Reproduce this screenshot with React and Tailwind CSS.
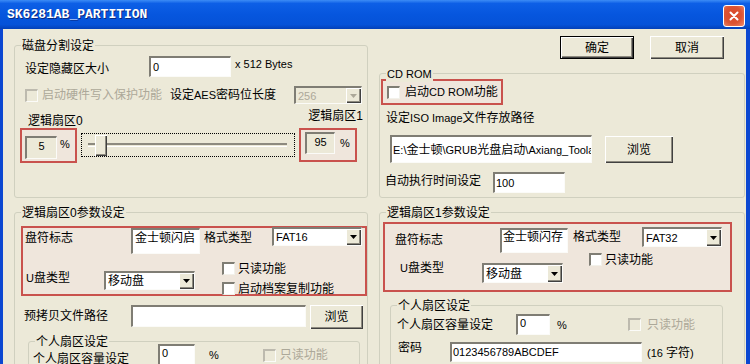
import React from "react";

const sunken =
  "border-t-2 border-l-2 border-r border-b border-t-[#7f7d74] border-l-[#7f7d74] border-r-[#fbfbf8] border-b-[#fbfbf8]";
const raised =
  "bg-[#ece9d8] shadow-[inset_1px_1px_0_#ffffff,inset_-1px_-1px_0_#404040,inset_-2px_-2px_0_#8d8a7f]";
const redBox = "border-2 border-[#c9524d] bg-[#efe6dc]";

function Check({ disabled }) {
  return disabled ? (
    <span className="block w-[13px] h-[13px] shrink-0 bg-[#ece9d8] border-t-2 border-l-2 border-r border-b border-t-[#bdbaae] border-l-[#bdbaae] border-r-[#fbfbf8] border-b-[#fbfbf8]" />
  ) : (
    <span className="block w-[13px] h-[13px] shrink-0 bg-white border-t-2 border-l-2 border-r border-b border-t-[#7f7d74] border-l-[#7f7d74] border-r-[#f2f1ea] border-b-[#f2f1ea]" />
  );
}

function Combo({ children, className, disabled }) {
  return (
    <div
      className={`flex shrink-0 ${sunken} ${
        disabled ? "bg-[#ece9d8] text-[#aca899]" : "bg-white"
      } ${className}`}
    >
      <span className="flex-1 flex items-center pl-[2px] overflow-hidden whitespace-nowrap">
        {children}
      </span>
      <span className={`w-[15px] flex items-center justify-center ${raised}`}>
        <svg width="7" height="4" viewBox="0 0 7 4">
          <path d="M0 0H7L3.5 4Z" fill={disabled ? "#aca899" : "#000"} />
        </svg>
      </span>
    </div>
  );
}

function Btn({ children, className, def }) {
  return def ? (
    <div
      className={`shrink-0 border border-black flex items-center justify-center ${raised} ${className}`}
    >
      {children}
    </div>
  ) : (
    <div className={`shrink-0 flex items-center justify-center ${raised} ${className}`}>
      {children}
    </div>
  );
}

function Group({ label, className, children }) {
  return (
    <div className={`relative shrink-0 border border-[#d0d0bf] rounded-[3px] ${className}`}>
      <span className="absolute left-[6px] -top-[8px] px-[1px] bg-[#ece9d8] leading-[16px] whitespace-nowrap">
        {label}
      </span>
      {children}
    </div>
  );
}

function L({ children }) {
  return <span className="text-[11px]">{children}</span>;
}

export default function App() {
  return (
    <div className="w-[750px] h-[364px] overflow-hidden flex flex-col text-[12px] leading-[16px] text-black [font-family:'Liberation_Sans','Noto_Sans_CJK_SC',sans-serif]">
      {/* Title bar */}
      <div className="h-[29px] shrink-0 flex items-center bg-[linear-gradient(180deg,#3c8cf6_0%,#0d5fe6_12%,#0656de_50%,#0552d8_85%,#0340b8_100%)]">
        <span className="ml-[7px] text-white font-bold text-[13px] leading-[16px] [font-family:'Liberation_Mono',monospace] [text-shadow:1px_1px_0_#0b2a80]">
          SK6281AB_PARTITION
        </span>
        <div className="ml-auto mr-[5px] mt-[3px] w-[22px] h-[22px] rounded-[3px] border border-white bg-[radial-gradient(circle_at_45%_45%,#d9482a_0%,#dc5433_55%,#f08d6c_100%)] flex items-center justify-center">
          <svg width="10" height="10" viewBox="0 0 10 10">
            <path d="M1.5 1.5L8.5 8.5M8.5 1.5L1.5 8.5" stroke="#fff" strokeWidth="2" strokeLinecap="round" />
          </svg>
        </div>
      </div>

      {/* Body */}
      <div className="flex-1 min-h-0 flex bg-[#ece9d8] border-l-[3px] border-r-[4px] border-[#0b47d1]">
        {/* Left column */}
        <div className="ml-[11px] w-[354px] shrink-0 flex flex-col">
          <Group label="磁盘分割设定" className="mt-[16px] h-[153px]">
            <div className="flex items-center mt-[10px] h-[21px] pl-[10px]">
              <span className="w-[124px] shrink-0 mt-[5px]">设定隐藏区大小</span>
              <div className={`${sunken} bg-white w-[82px] h-[21px] pl-[2px] text-[11px] leading-[18px]`}>0</div>
              <span className="ml-[4px] mb-[5px] text-[11px]">x 512 Bytes</span>
            </div>
            <div className="flex items-center mt-[9px] h-[18px] pl-[10px] pr-[5px]">
              <Check disabled />
              <span className="ml-[4px] text-[#aca899]">启动硬件写入保护功能</span>
              <span className="ml-[8px]">
                设定<L>AES</L>密码位长度
              </span>
              <Combo disabled className="ml-auto w-[68px] h-[18px]">
                <L>256</L>
              </Combo>
            </div>
            <div className="flex justify-between items-start mt-[4px] h-[20px] pl-[13px] pr-[4px]">
              <span className="mt-[5px]">逻辑扇区0</span>
              <span>逻辑扇区1</span>
            </div>
            <div className="flex items-start h-[35px]">
              <div className={`ml-[5px] w-[57px] h-[35px] flex items-start ${redBox}`}>
                <div className={`ml-[3px] mt-[6px] w-[32px] h-[23px] ${sunken} bg-[#ece9d8] flex justify-center text-[11px] leading-[16px]`}>
                  5
                </div>
                <span className="ml-[3px] mt-[6px] text-[11px]">%</span>
              </div>
              <div className="relative ml-[4px] mt-[5px] w-[214px] h-[24px] border border-dotted border-black">
                <div className="ml-[6px] mt-[9px] w-[199px] h-[4px] border-t-2 border-t-[#8d8a7f] border-b border-b-white bg-[#ece9d8]" />
                <div className={`absolute left-[13px] top-[1px] w-[12px] h-[21px] ${raised}`} />
              </div>
              <div className={`ml-[4px] w-[58px] h-[34px] flex items-start ${redBox}`}>
                <div className={`ml-[4px] mt-[2px] w-[30px] h-[22px] ${sunken} bg-[#ece9d8] flex justify-center text-[11px] leading-[16px]`}>
                  95
                </div>
                <span className="ml-[5px] mt-[5px] text-[11px]">%</span>
              </div>
            </div>
          </Group>

          <Group label="逻辑扇区0参数设定" className="mt-[14px] h-[200px]">
            <div className={`ml-[6px] mt-[13px] w-[346px] h-[70px] ${redBox}`}>
              <div className="flex items-start h-[27px]">
                <span className="ml-[2px] mt-[2px] w-[106px] shrink-0">盘符标志</span>
                <div className={`w-[69px] h-[26px] ${sunken} bg-white pl-[2px] leading-[16px] whitespace-nowrap overflow-hidden`}>
                  金士顿闪启
                </div>
                <span className="ml-[4px] mt-[2px]">格式类型</span>
                <Combo className="ml-[20px] -mt-[1px] w-[90px] h-[19px]">
                  <L>FAT16</L>
                </Combo>
              </div>
              <div className="flex items-start">
                <span className="ml-[3px] mt-[15px] w-[78px] shrink-0">
                  <L>U</L>盘类型
                </span>
                <Combo className="mt-[16px] w-[91px] h-[19px]">移动盘</Combo>
                <div className="ml-[27px] mt-[7px] flex flex-col gap-[7px]">
                  <div className="flex items-center h-[13px]">
                    <Check />
                    <span className="ml-[3px]">只读功能</span>
                  </div>
                  <div className="flex items-center h-[13px]">
                    <Check />
                    <span className="ml-[3px]">启动档案复制功能</span>
                  </div>
                </div>
              </div>
            </div>
            <div className="flex items-start mt-[9px] pl-[9px]">
              <span className="w-[107px] shrink-0 mt-[3px]">预拷贝文件路径</span>
              <div className={`w-[175px] h-[22px] ${sunken} bg-white`} />
              <Btn className="ml-[4px] w-[53px] h-[24px]">浏览</Btn>
            </div>
            <Group label="个人扇区设定" className="mt-[12px] ml-[13px] w-[332px] h-[60px]">
              <div className="flex items-start mt-[2px]">
                <span className="ml-[4px] mt-[7px] w-[125px] shrink-0">个人扇区容量设定</span>
                <div className={`w-[37px] h-[21px] ${sunken} bg-white pl-[2px] text-[11px] leading-[14px]`}>0</div>
                <span className="ml-[14px] mt-[3px] text-[11px]">%</span>
                <span className="ml-[44px] mt-[5px]">
                  <Check disabled />
                </span>
                <span className="ml-[4px] mt-[3px] text-[#aca899]">只读功能</span>
              </div>
            </Group>
          </Group>
        </div>

        {/* Right column */}
        <div className="ml-[11px] w-[366px] shrink-0 flex flex-col">
          <div className="flex justify-end gap-[16px] mt-[7px] pr-[21px]">
            <Btn def className="w-[74px] h-[23px]">确定</Btn>
            <Btn className="w-[74px] h-[23px]">取消</Btn>
          </div>

          <Group label={<L>CD ROM</L>} className="mt-[14px] h-[125px]">
            <div className={`ml-[1px] mt-[5px] w-[122px] h-[26px] flex items-center ${redBox}`}>
              <span className="ml-[4px]">
                <Check />
              </span>
              <span className="ml-[5px] whitespace-nowrap">
                启动<L>CD ROM</L>功能
              </span>
            </div>
            <div className="mt-[5px] pl-[6px]">
              设定<L>ISO Image</L>文件存放路径
            </div>
            <div className="flex items-start mt-[9px] pl-[10px]">
              <div className={`w-[202px] h-[28px] ${sunken} bg-white flex items-center pl-[1px] whitespace-nowrap overflow-hidden`}>
                <L>E:\</L>金士顿<L>\GRUB</L>光盘启动<L>\Axiang_Toolas</L>
              </div>
              <Btn className="ml-[13px] mt-[1px] w-[68px] h-[27px]">浏览</Btn>
            </div>
            <div className="flex items-center mt-[9px] pl-[5px]">
              <span className="w-[108px] shrink-0 mb-[3px]">自动执行时间设定</span>
              <div className={`w-[72px] h-[21px] ${sunken} bg-white pl-[1px] text-[11px] leading-[18px]`}>100</div>
            </div>
          </Group>

          <Group label="逻辑扇区1参数设定" className="mt-[14px] h-[200px]">
            <div className={`ml-[3px] mt-[9px] w-[349px] h-[70px] ${redBox}`}>
              <div className="flex items-start h-[29px]">
                <span className="ml-[10px] mt-[8px] w-[105px] shrink-0">盘符标志</span>
                <div className={`mt-[4px] w-[68px] h-[25px] ${sunken} bg-white pl-[1px] leading-[14px] whitespace-nowrap overflow-hidden`}>
                  金士顿闪存
                </div>
                <span className="ml-[5px] mt-[5px]">格式类型</span>
                <Combo className="ml-[21px] mt-[3px] w-[80px] h-[20px]">
                  <L>FAT32</L>
                </Combo>
              </div>
              <div className="flex items-start">
                <span className="ml-[15px] mt-[7px] w-[82px] shrink-0">
                  <L>U</L>盘类型
                </span>
                <Combo className="mt-[10px] w-[81px] h-[20px]">移动盘</Combo>
                <div className="ml-[26px] flex items-center h-[13px]">
                  <Check />
                  <span className="ml-[3px]">只读功能</span>
                </div>
              </div>
            </div>
            <Group label="个人扇区设定" className="mt-[13px] ml-[10px] w-[333px] h-[80px]">
              <div className="flex items-start mt-[8px]">
                <span className="ml-[6px] mt-[3px] w-[119px] shrink-0">个人扇区容量设定</span>
                <div className={`w-[34px] h-[21px] ${sunken} bg-white pl-[2px] text-[11px] leading-[14px]`}>0</div>
                <span className="ml-[7px] mt-[3px] w-[11px] text-[11px]">%</span>
                <span className="ml-[60px] mt-[4px]">
                  <Check disabled />
                </span>
                <span className="ml-[6px] mt-[3px] text-[#aca899]">只读功能</span>
              </div>
              <div className="flex items-start mt-[7px]">
                <span className="ml-[7px] -mt-[2px] w-[52px] shrink-0">密码</span>
                <div className={`w-[192px] h-[20px] ${sunken} bg-white pl-[1px] text-[11px] leading-[16px]`}>
                  0123456789ABCDEF
                </div>
                <span className="ml-[5px] mt-[3px] whitespace-nowrap">
                  <L>(16 </L>字符<L>)</L>
                </span>
              </div>
            </Group>
          </Group>
        </div>
      </div>
    </div>
  );
}
